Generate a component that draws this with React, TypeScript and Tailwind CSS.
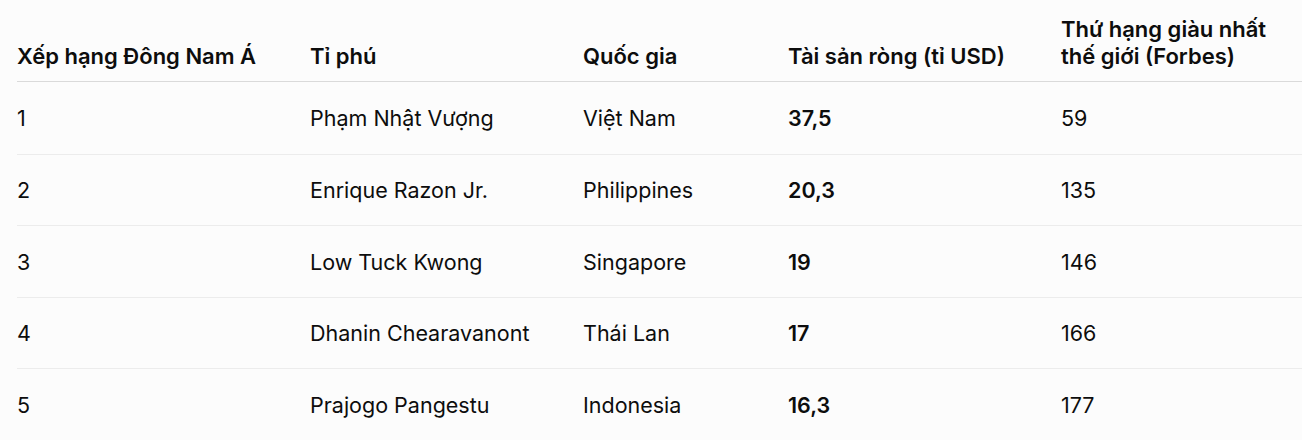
const HEADERS = [
  "Xếp hạng Đông Nam Á",
  "Tỉ phú",
  "Quốc gia",
  "Tài sản ròng (tỉ USD)",
  "Thứ hạng giàu nhất thế giới (Forbes)",
];

const ROWS = [
  ["1", "Phạm Nhật Vượng", "Việt Nam", "37,5", "59"],
  ["2", "Enrique Razon Jr.", "Philippines", "20,3", "135"],
  ["3", "Low Tuck Kwong", "Singapore", "19", "146"],
  ["4", "Dhanin Chearavanont", "Thái Lan", "17", "166"],
  ["5", "Prajogo Pangestu", "Indonesia", "16,3", "177"],
];

const COLS = "grid grid-cols-[293px_273px_205px_273px_1fr]";

export default function App() {
  return (
    <div
      className="w-[1302px] h-[440px] overflow-hidden bg-[#fcfcfc] text-[#0d0d0d] pl-[17px]"
      style={{ fontFamily: "Inter, 'Noto Sans', sans-serif" }}
    >
      <div
        className={
          COLS +
          " h-[82px] items-end pb-[11px] border-b border-[#dadada] text-[22px] leading-[27px] font-semibold"
        }
      >
        {HEADERS.map((h, i) => (
          <div key={i} className="pr-4">
            {h}
          </div>
        ))}
      </div>
      {ROWS.map((r, ri) => (
        <div
          key={ri}
          className={
            COLS +
            " h-[71.5px] items-center text-[21.5px] leading-[27px] " +
            (ri > 0 ? "border-t border-[#ececec]" : "")
          }
        >
          {r.map((c, ci) => (
            <div
              key={ci}
              className={ci === 3 ? "font-semibold pr-4 pt-[2px]" : "pr-4 pt-[2px]"}
            >
              {c}
            </div>
          ))}
        </div>
      ))}
    </div>
  );
}
